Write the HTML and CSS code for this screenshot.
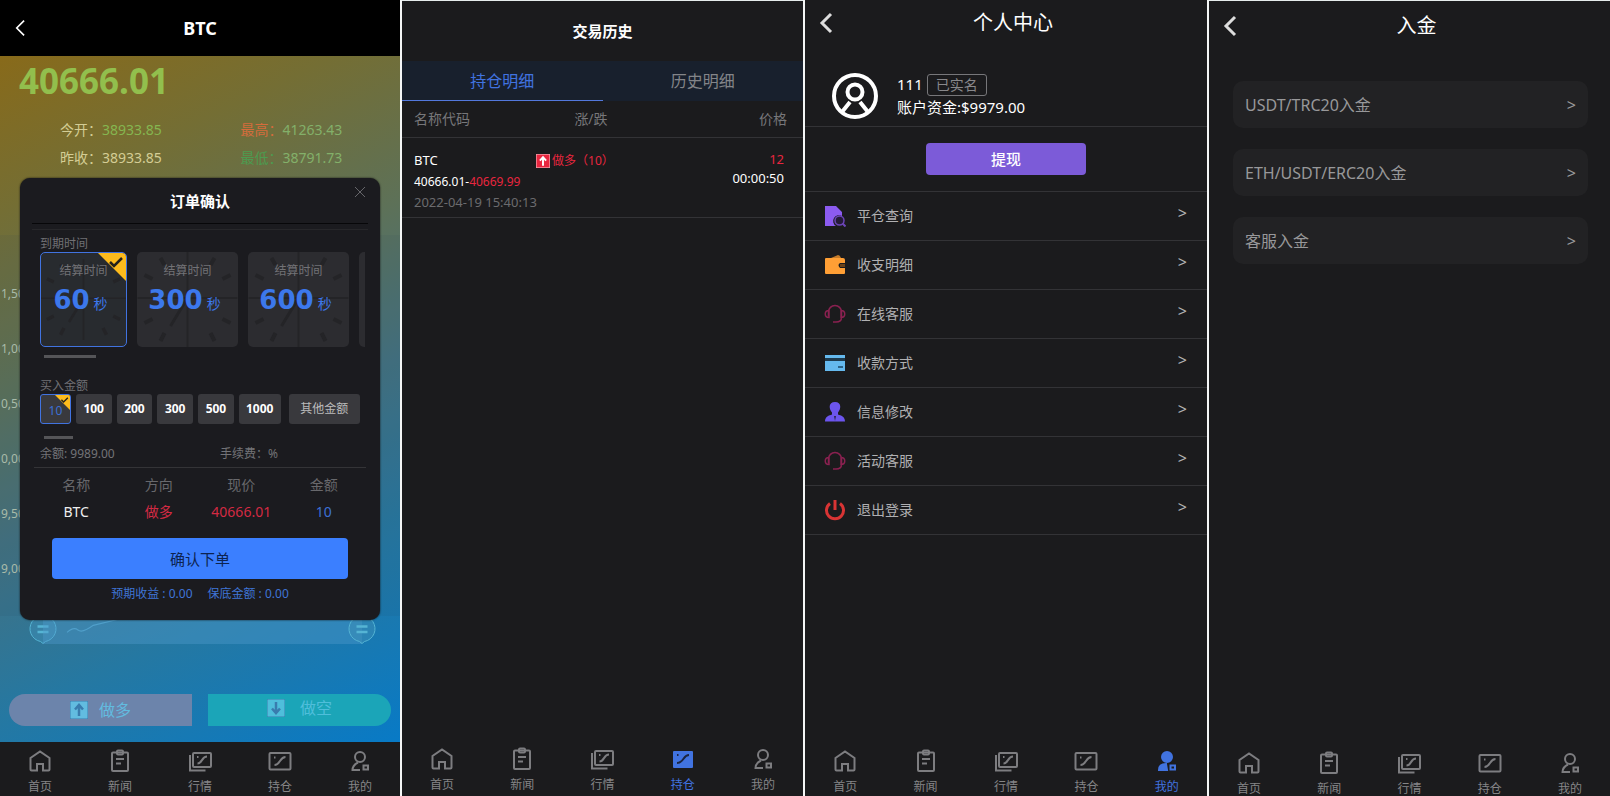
FILE: index.html
```html
<!DOCTYPE html>
<html lang="zh-CN">
<head>
<meta charset="utf-8">
<title>BTC</title>
<link rel="stylesheet" href="styles.css">
</head>
<body>
<svg class="sprite" aria-hidden="true">
  <symbol id="home" viewBox="0 0 24 24"><path d="M9 21.500H3.500a1 1 0 0 1-1-1V9L12 2.500 21.500 9v11.500a1 1 0 0 1-1 1H15v-6.500H9z"/></symbol>
  <symbol id="news" viewBox="0 0 24 24"><rect x="4" y="3.500" width="16" height="18.500" rx="1"/><rect x="9" y="1.500" width="6" height="4" rx="1"/><path d="M8 10h8M8 14.500h5"/></symbol>
  <symbol id="market" viewBox="0 0 24 24"><rect x="5" y="4" width="18" height="14" rx="1"/><path d="M2 6v15.500h15.500M9.500 14.500c5 0 4-7 9.500-7M9 8h1.500"/></symbol>
  <symbol id="position" viewBox="0 0 24 24"><rect x="1.500" y="4" width="21" height="16.500" rx="1"/><path d="M6.500 16c6 0 5-8 11-8M6 8.500h1.500"/></symbol>
  <symbol id="mine" viewBox="0 0 24 24"><circle cx="12" cy="8" r="5"/><path d="M12 21H4.500c0-4 2.500-6 5.500-7.500M15.500 16.500h4.500v4h-4.500z"/></symbol>
  <symbol id="back" viewBox="0 0 14 22"><path d="M12 2 3 11l9 9"/></symbol>
  <symbol id="clock" viewBox="0 0 100 95">
    <path d="M50 0v95M0 46h100" stroke-width="2"/><path d="M50 46 33 74" stroke-width="3"/>
    <path d="m23 6 4 7m50-7-4 7M7 23l8 4m78-4-8 4M7 71l8-4m78 4-8-4M23 89l4-8m50 8-4-8" stroke-width="4"/>
  </symbol>
  <symbol id="up" viewBox="0 0 18 18"><rect width="18" height="18" rx="1" fill="currentColor"/><path class="arrow" d="M9 15V5M5 8.500 9 4l4 4.500" fill="none" stroke-width="2.500"/></symbol>
  <symbol id="down" viewBox="0 0 18 18"><rect width="18" height="18" rx="1" fill="currentColor"/><path class="arrow" d="M9 3v10M5 9.500 9 14l4-4.500" fill="none" stroke-width="2.500"/></symbol>
  <symbol id="corner" viewBox="0 0 28 28"><path d="M0 0h25q3 0 3 3v25z" fill="#fdbb1c"/><path d="m12 9 4 4 8-8" fill="none" stroke="#25221c" stroke-width="2.500"/></symbol>
  <symbol id="handle" viewBox="0 0 28 28"><path d="M14 27.500 11.500 25.500A13 13 0 1 1 16.500 25.500z" fill="#3d8fb8" fill-opacity=".5" stroke="#55b4d4"/><path d="M8.500 10.500h11M8.500 16h11" stroke="#55b4d4" stroke-width="2.500"/></symbol>
  <symbol id="headset" viewBox="0 0 22 22"><path d="M4.500 13V9a6.500 6.500 0 0 1 13 0v5.500c0 3-2 4.500-5.500 4.500M5 7.500c-5 0-5 7 0 7zM17 7.500c5 0 5 7 0 7zM9 19h3.500" fill="none" stroke="#8a2150" stroke-width="1.500"/></symbol>
</svg>
<main class="board">

  <section class="phone trade">
    <header class="bar"><button class="back" aria-label="返回"><svg><use href="#back"/></svg></button><h1>BTC</h1></header>
    <div class="quote">
      <p class="price">40666.01</p>
      <dl class="stats">
        <div><dt>今开：</dt><dd class="green">38933.85</dd></div>
        <div class="high"><dt>最高：</dt><dd>41263.43</dd></div>
        <div><dt>昨收：</dt><dd>38933.85</dd></div>
        <div class="low"><dt>最低：</dt><dd>38791.73</dd></div>
      </dl>
      <div class="chart"><span>1,500</span><span>1,000</span><span>0,500</span><span>0,000</span><span>9,500</span><span>9,000</span></div>
      <div class="range">
        <svg class="knob"><use href="#handle"/></svg>
        <svg class="spark" viewBox="0 0 292 24" preserveAspectRatio="none"><path d="M22 14q6-5 10-2t14-4l22-5"/></svg>
        <svg class="knob"><use href="#handle"/></svg>
      </div>
      <div class="sides"><button class="long"><svg><use href="#up"/></svg>做多</button><button class="short"><svg><use href="#down"/></svg>做空</button></div>
    </div>
    <nav class="tabs">
      <a href="#"><svg><use href="#home"/></svg>首页</a><a href="#"><svg><use href="#news"/></svg>新闻</a><a href="#"><svg><use href="#market"/></svg>行情</a><a href="#"><svg><use href="#position"/></svg>持仓</a><a href="#"><svg><use href="#mine"/></svg>我的</a>
    </nav>

    <div class="modal" role="dialog" aria-labelledby="order-title">
      <h2 id="order-title">订单确认</h2>
      <button class="close" aria-label="关闭"><svg viewBox="0 0 12 12"><path d="m1 1 10 10M11 1 1 11"/></svg></button>
      <h3>到期时间</h3>
      <div class="times">
        <button class="time on"><svg class="dial"><use href="#clock"/></svg><span>结算时间</span><span><b>60</b> 秒</span><svg class="tick"><use href="#corner"/></svg></button>
        <button class="time"><svg class="dial"><use href="#clock"/></svg><span>结算时间</span><span><b>300</b> 秒</span></button>
        <button class="time"><svg class="dial"><use href="#clock"/></svg><span>结算时间</span><span><b>600</b> 秒</span></button>
        <button class="time" aria-label="更多"></button>
      </div>
      <div class="scroll wide"></div>
      <h3>买入金额</h3>
      <div class="amounts">
        <button class="on">10<svg class="tick"><use href="#corner"/></svg></button><button>100</button><button>200</button><button>300</button><button>500</button><button>1000</button><button class="other">其他金额</button>
      </div>
      <div class="scroll"></div>
      <div class="balance"><span>余额: 9989.00</span><span>手续费：%</span></div>
      <table class="order">
        <thead><tr><th>名称</th><th>方向</th><th>现价</th><th>金额</th></tr></thead>
        <tbody><tr><td class="white">BTC</td><td>做多</td><td>40666.01</td><td class="blue">10</td></tr></tbody>
      </table>
      <button class="confirm">确认下单</button>
      <p class="profit"><span>预期收益 : 0.00</span><span>保底金额 : 0.00</span></p>
    </div>
  </section>

  <section class="phone history">
    <h1>交易历史</h1>
    <div class="switch"><button class="on">持仓明细</button><button>历史明细</button></div>
    <div class="row head"><span>名称代码</span><span>涨/跌</span><span>价格</span></div>
    <div class="row deal">
      <div><p>BTC</p><p class="rate">40666.01-<em>40669.99</em></p><p class="date">2022-04-19 15:40:13</p></div>
      <p class="side"><svg><use href="#up"/></svg>做多（10）</p>
      <div class="end"><p><em>12</em></p><p>00:00:50</p></div>
    </div>
    <nav class="tabs">
      <a href="#"><svg><use href="#home"/></svg>首页</a><a href="#"><svg><use href="#news"/></svg>新闻</a><a href="#"><svg><use href="#market"/></svg>行情</a><a href="#" class="on"><svg viewBox="0 0 24 24"><rect x="2" y="4" width="20" height="17" rx="1" fill="#4173e0" stroke="none"/><path d="M6 16c7 0 6-8 12-8M6 8h1.500" stroke="#1b2540"/></svg>持仓</a><a href="#"><svg><use href="#mine"/></svg>我的</a>
    </nav>
  </section>

  <section class="phone account">
    <header class="bar"><button class="back" aria-label="返回"><svg><use href="#back"/></svg></button><h1>个人中心</h1></header>
    <div class="profile">
      <svg viewBox="0 0 46 46"><circle cx="23" cy="23" r="21"/><circle cx="23" cy="19" r="7.500"/><path d="m18 29-8 10m18-10 8 10"/></svg>
      <div><p>111 <span class="badge">已实名</span></p><p>账户资金:$9979.00</p></div>
    </div>
    <div class="withdraw"><button>提现</button></div>
    <ul class="menu">
      <li><a href="#"><svg viewBox="0 0 22 22"><path d="M1 1h11l6 6v4a5 5 0 0 0-6 10H1z" fill="#8c5bf0"/><circle cx="15.500" cy="15.500" r="4.500" fill="#251a38" stroke="#6c45b8" stroke-width="1.500"/><path d="m18.500 18.500 3 3" stroke="#6c45b8" stroke-width="2"/></svg>平仓查询<i>&gt;</i></a></li>
      <li><a href="#"><svg viewBox="0 0 22 22"><path d="m7 4 7-3q2 0 3 3z" fill="#c47b2b"/><path d="M1 5q0-1 1-1h17q2 0 2 2v3h-5q-3 2 0 5h5v5q0 1-1 1H2q-1 0-1-1z" fill="#ff9f35"/><path d="M16 10h5v3h-5z" fill="#6b421a"/></svg>收支明细<i>&gt;</i></a></li>
      <li><a href="#"><svg><use href="#headset"/></svg>在线客服<i>&gt;</i></a></li>
      <li><a href="#"><svg viewBox="0 0 22 22"><path d="M1 3h20v3H1zM1 9h20v10H1z" fill="#65b9ee"/><path d="M1 6h20v3H1z" fill="#1e3a4d"/><path d="M14 15h5" stroke="#2c6287" stroke-width="2"/></svg>收款方式<i>&gt;</i></a></li>
      <li><a href="#"><svg viewBox="0 0 22 22"><path d="M11 1c7 0 6 7 3 10.500v2c3 1 7 2 7 7H1c0-5 4-6 7-7v-2C5 8 4 1 11 1z" fill="#6c55ee"/><path d="m10 15 1 5 1-5z" fill="#2a2452"/></svg>信息修改<i>&gt;</i></a></li>
      <li><a href="#"><svg><use href="#headset"/></svg>活动客服<i>&gt;</i></a></li>
      <li><a href="#"><svg viewBox="0 0 22 22"><path d="M6 4.500a8.500 8.500 0 1 0 10 0M11 1v10" fill="none" stroke="#d93434" stroke-width="3"/></svg>退出登录<i>&gt;</i></a></li>
    </ul>
    <nav class="tabs">
      <a href="#"><svg><use href="#home"/></svg>首页</a><a href="#"><svg><use href="#news"/></svg>新闻</a><a href="#"><svg><use href="#market"/></svg>行情</a><a href="#"><svg><use href="#position"/></svg>持仓</a><a href="#" class="on"><svg viewBox="0 0 24 24"><circle cx="12" cy="8" r="5" fill="#4173e0"/><path d="M12 21H4c0-4 2.500-6 7-6z" fill="#4173e0"/><path d="M15.500 16.500h4.500v4h-4.500z"/></svg>我的</a>
    </nav>
  </section>

  <section class="phone deposit">
    <header class="bar"><button class="back" aria-label="返回"><svg><use href="#back"/></svg></button><h1>入金</h1></header>
    <div class="methods">
      <a href="#">USDT/TRC20入金<i>&gt;</i></a>
      <a href="#">ETH/USDT/ERC20入金<i>&gt;</i></a>
      <a href="#">客服入金<i>&gt;</i></a>
    </div>
    <nav class="tabs">
      <a href="#"><svg><use href="#home"/></svg>首页</a><a href="#"><svg><use href="#news"/></svg>新闻</a><a href="#"><svg><use href="#market"/></svg>行情</a><a href="#"><svg><use href="#position"/></svg>持仓</a><a href="#"><svg><use href="#mine"/></svg>我的</a>
    </nav>
  </section>
</main>
</body>
</html>
```

FILE: styles.css
```css
* { box-sizing: border-box; margin: 0; padding: 0; }
body {
  font: 14px/20px "Noto Sans", "Noto Sans CJK SC", sans-serif;
  color: #fff;
  background: #f4f6f6;
}
button { font: inherit; color: inherit; background: none; border: 0; }
a { color: inherit; text-decoration: none; }
i, em { font-style: normal; }
em { color: #e8263f; }
svg { flex: none; }
.sprite { position: absolute; width: 0; height: 0; }

.board {
  display: grid;
  grid-template-columns: 400fr 401fr 402fr 401fr;
  gap: 2px;
  min-height: 100vh;
}
.phone {
  position: relative;
  display: flex;
  flex-direction: column;
  min-width: 0;
  background: #1b1b1d;
}
.history, .deposit { border-top: 1px solid #e6ecec; }

/* Title bars */
.bar { display: flex; align-items: center; height: 46px; padding: 0 14px; }
.bar h1 { flex: 1; text-align: center; font-size: 20px; line-height: 28px; font-weight: 400; }
.back { display: flex; }
.back svg { width: 14px; height: 22px; fill: none; stroke: #ddd; stroke-width: 3; }
.deposit .bar { height: 50px; }

/* Bottom navigation */
.tabs {
  display: grid;
  grid-template-columns: repeat(5, 1fr);
  min-height: 54px;
  margin-top: auto;
  padding-top: 7px;
  background: #1b1b1d;
  color: #858587;
}
.tabs a { display: flex; flex-direction: column; align-items: center; gap: 8px; font-size: 12px; line-height: 12px; }
.tabs svg { width: 24px; height: 24px; fill: none; stroke: #7d7d80; stroke-width: 2; }
.tabs .on { color: #4173e0; }
.tabs .on svg { stroke: #4173e0; }
.history .tabs { padding-top: 5px; }
.deposit .tabs { padding-top: 9px; }

/* Trade screen */
.trade .bar { height: 56px; background: #000; }
.trade .bar h1 { font-size: 18px; font-weight: 700; padding-right: 12px; }
.trade .back svg { width: 12px; height: 18px; stroke-width: 2; stroke: #fff; }
.quote {
  flex: 1;
  display: flex;
  flex-direction: column;
  background: linear-gradient(155deg, #886a1a 0%, #746e34 18%, #5d7158 38%, #437180 56%, #2578a2 76%, #087ac6 100%);
}
.price { padding: 4px 19px; font-size: 35px; line-height: 42px; font-weight: 700; color: #92bf4d; }
.stats { display: grid; grid-template-columns: 181fr 160fr; row-gap: 8px; padding: 14px 0 0 60px; color: #d4cd95; }
.stats div { display: flex; }
.stats .green { color: #85b650; }
.stats .high { color: #83b06a; }
.stats .high dt { color: #d46c3c; }
.stats .low dt { color: #4d9b50; }
.stats .low dd { color: #83b06a; }
.chart { flex: 1; display: flex; flex-direction: column; gap: 35px; margin-top: 67px; padding: 49px 0 0 1px; font-size: 12px; color: #a9bba9; background: rgba(40, 70, 90, .08); }
.range { display: flex; padding: 0 20px 0 25px; height: 28px; }
.knob { width: 36px; height: 28px; }
.spark { flex: 1; height: 28px; margin: 0 -18px; background: rgba(80, 155, 205, .4); fill: none; stroke: #509fca; }
.sides { display: grid; grid-template-columns: 1fr 1fr; gap: 16px; padding: 50px 9px 16px; }
.sides button { display: flex; align-items: center; justify-content: center; gap: 11px; height: 32px; font-size: 16px; color: #62bce0; }
.sides svg { width: 18px; height: 18px; stroke: #397cae; }
.sides .long { border-radius: 16px 0 0 16px; background: #6c84ab; }
.sides .short { border-radius: 0 16px 16px 0; background: #1ba5b8; gap: 15px; padding-bottom: 4px; color: #4fbedb; }

/* Order dialog */
.modal {
  position: absolute;
  top: 178px;
  left: 5%;
  right: 5%;
  padding: 0 20px 16px;
  border-radius: 10px;
  background: #1b1b1f;
  box-shadow: 0 0 2px #101010;
}
.modal h2 { margin: 0 -8px; padding: 12px 0 11px; font-size: 15px; line-height: 22px; text-align: center; border-bottom: 1px solid #070709; box-shadow: 0 5px 0 #1b1b1f, 0 6px 0 #27272a; }
.modal h3 { font-size: 12px; line-height: 16px; font-weight: 400; color: #707074; }
.close { position: absolute; top: 8px; right: 14px; display: flex; }
.close svg { width: 12px; height: 12px; stroke: #66666a; }
.modal h2 + .close + h3 { margin-top: 12px; }
.times { display: flex; gap: 10px; margin-right: -5px; overflow: hidden; }
.time {
  position: relative;
  flex: 0 0 101px;
  display: flex;
  flex-direction: column;
  align-items: center;
  height: 95px;
  padding-top: 9px;
  border-radius: 5px;
  background: #2c2c30;
  font-size: 12px;
  color: #727276;
  overflow: hidden;
}
.time.on { flex-basis: 87px; padding-top: 8px; border: 1px solid #4173e0; background: #282b2f; }
.time span { position: relative; }
.time span + span { display: flex; align-items: baseline; gap: 4px; margin-top: 3px; padding-right: 6px; font-size: 14px; line-height: 32px; color: #3c78ec; }
.time b { font: 700 26px/32px "DejaVu Sans", sans-serif; }
.dial { position: absolute; top: 0; left: 0; width: 100%; height: 100%; stroke: #242427; }
.tick { position: absolute; top: 0; right: 0; width: 28px; height: 28px; }
.scroll { width: 29px; height: 3px; margin: 12px 4px 5px; background: #555558; }
.scroll.wide { width: 52px; margin: 8px 4px 20px; }
.amounts { display: flex; gap: 5px; font-size: 12px; font-weight: 700; }
.amounts button { position: relative; height: 30px; flex: 36 1 0; border-radius: 3px; background: #39393d; }
.amounts .on { flex-grow: 29; border: 1px solid #4173e0; font-weight: 400; color: #3c70d4; padding-top: 3px; }
.amounts button:nth-child(6) { flex-grow: 42; }
.amounts .other { flex-grow: 72; margin-left: 3px; font-weight: 400; color: #bbb; }
.amounts .tick { width: 15px; height: 15px; }
.balance { display: grid; grid-template-columns: 9fr 7fr; margin: 0 -6px; padding: 0 6px 3px; font-size: 12px; color: #737377; border-bottom: 1px solid #343437; }
.order { width: calc(100% + 10px); margin: 4px -5px 0; border-collapse: collapse; table-layout: fixed; text-align: center; }
.order th { font-weight: 400; color: #68686c; line-height: 26px; }
.order td { color: #d42a43; line-height: 27px; }
.order .white { color: #eee; }
.order .blue { color: #3c70d4; }
.confirm { display: block; width: calc(100% - 24px); height: 41px; margin: 13px auto 5px; border-radius: 4px; background: #3b7fff; color: #0d2350; font-size: 15px; }
.profit { display: flex; justify-content: center; gap: 15px; font-size: 12px; color: #3f75d6; }

/* Trade history screen */
.history h1 { font-size: 15px; line-height: 60px; text-align: center; }
.switch { display: grid; grid-template-columns: 1fr 1fr; height: 40px; background: #18202d; color: #838589; font-size: 16px; }
.switch .on { color: #4173e0; border-bottom: 1px solid #5378dc; }
.row { display: grid; padding: 0 16px 0 12px; border-bottom: 1px solid #333336; }
.row > :last-child { text-align: right; }
.head { grid-template-columns: 43% 1fr 1fr; line-height: 36px; color: #77777a; }
.deal { grid-template-columns: 33% 1fr 1fr; padding: 12px 19px 4px 12px; font-size: 13px; line-height: 21px; white-space: nowrap; }
.deal .rate { font-size: 12px; }
.deal .date { color: #6b6b6e; }
.deal .end { line-height: 19px; }
.side { display: flex; align-items: center; align-self: start; gap: 2px; color: #e8263f; font-size: 12px; }
.side svg { width: 14px; height: 14px; stroke: #fff; }

/* Account screen */
.profile { display: flex; gap: 19px; padding: 27px 27px 7px; border-bottom: 1px solid #333336; }
.profile > svg { width: 46px; height: 46px; fill: none; stroke: #fff; stroke-width: 4; }
.profile p { font-size: 15px; line-height: 23px; }
.badge { display: inline-block; padding: 0 8px; border: 1px solid #77777a; border-radius: 3px; font-size: 14px; line-height: 20px; color: #88888b; }
.withdraw { padding: 16px 0; text-align: center; border-bottom: 1px solid #333336; }
.withdraw button { display: block; width: 40%; height: 32px; margin: 0 auto; border-radius: 4px; background: #7c5bd8; font-size: 15px; font-weight: 500; }
.menu { list-style: none; }
.menu a { display: flex; align-items: center; height: 49px; padding: 0 20px 0 19px; gap: 11px; color: #b0b0b2; border-bottom: 1px solid #333336; }
.menu svg { width: 22px; height: 22px; }
.menu i { margin-left: auto; padding-bottom: 6px; font-size: 16px; }

/* Deposit screen */
.methods { display: grid; gap: 21px; padding: 30px 22px 0 24px; }
.methods a { display: flex; justify-content: space-between; align-items: center; height: 47px; padding: 0 12px; border-radius: 10px; background: #222224; color: #98989a; font-size: 16px; }
```
